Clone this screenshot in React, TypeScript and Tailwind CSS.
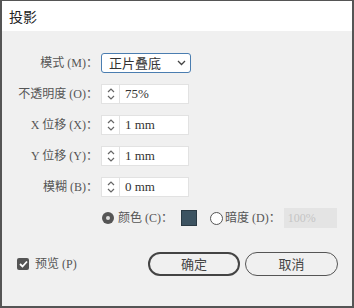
import React from 'react';

const font = { fontFamily: '"Liberation Serif", "Noto Sans CJK SC", serif' };
const cjk = { fontFamily: '"Noto Sans CJK SC", "Liberation Sans", sans-serif' };

const Spinner: React.FC<{ value: string }> = ({ value }) => (
  <div className="flex h-[20px] w-[88px] border border-[#e2e2e2] bg-white">
    <div className="flex w-[18px] flex-col items-center justify-center border-r border-[#e2e2e2]">
      <svg width="10" height="16" viewBox="0 0 10 16" fill="none" stroke="#666" strokeWidth="1.2">
        <path d="M2 6 L5 3 L8 6" />
        <path d="M2 10 L5 13 L8 10" />
      </svg>
    </div>
    <div className="flex items-center pl-[5px] text-[13px] text-[#333]" style={font}>{value}</div>
  </div>
);

const Label: React.FC<{ text: string }> = ({ text }) => (
  <div className="text-right text-[12px] text-[#555] whitespace-nowrap" style={font}>{text}</div>
);

const fields = [
  { label: '不透明度 (O)：', value: '75%' },
  { label: 'X 位移 (X)：', value: '1 mm' },
  { label: 'Y 位移 (Y)：', value: '1 mm' },
  { label: '模糊 (B)：', value: '0 mm' },
];

export default function App() {
  return (
    <div className="flex h-[308px] w-[354px] flex-col border-t border-x-2 border-b-2 border-[#555] bg-[#f0f0f0]">
      <div className="flex h-[30px] items-center bg-white pl-[7px] text-[14px] text-[#222]" style={cjk}>
        投影
      </div>

      <div className="flex flex-col gap-[11px] pt-[22px]">
        <div className="grid grid-cols-[96px_1fr] items-center gap-x-[3px]">
          <Label text="模式 (M)：" />
          <div className="flex h-[20px] w-[90px] items-center justify-between rounded-[3px] border border-[#4a7db0] bg-white pl-[7px] pr-[4px]">
            <span className="text-[13px] text-[#333]" style={cjk}>正片叠底</span>
            <svg width="9" height="6" viewBox="0 0 9 6" fill="none" stroke="#444" strokeWidth="1.3">
              <path d="M1 1 L4.5 4.5 L8 1" />
            </svg>
          </div>
        </div>

        {fields.map(f => (
          <div key={f.label} className="grid grid-cols-[96px_1fr] items-center gap-x-[3px]">
            <Label text={f.label} />
            <Spinner value={f.value} />
          </div>
        ))}

        <div className="flex h-[20px] items-center pl-[100px]">
          <div className="flex h-[12px] w-[12px] items-center justify-center rounded-full bg-[#555]">
            <div className="h-[4px] w-[4px] rounded-full bg-[#ddd]" />
          </div>
          <span className="ml-[4px] text-[12px] text-[#555]" style={font}>颜色 (C)：</span>
          <div className="ml-[8px] h-[16px] w-[16px] border border-[#2a3a44] bg-[#3c5361]" />
          <div className="ml-[13px] h-[13px] w-[13px] rounded-full border border-[#555] bg-white" />
          <span className="ml-[2px] text-[12px] text-[#555]" style={font}>暗度 (D)：</span>
          <div className="ml-[3px] flex h-[20px] w-[53px] items-center bg-[#e4e4e4] pl-[4px] text-[12px] text-[#c4c4c4]" style={font}>
            100%
          </div>
        </div>

        <div className="mt-[13px] flex items-center pl-[15px]">
          <div className="flex h-[12px] w-[12px] items-center justify-center rounded-[2px] bg-[#555]">
            <svg width="9" height="8" viewBox="0 0 9 8" fill="none" stroke="#fff" strokeWidth="1.8">
              <path d="M1 4 L3.5 6.5 L8 1.5" />
            </svg>
          </div>
          <span className="ml-[6px] w-[47px] text-[12px] text-[#555]" style={font}>预览 (P)</span>
          <button className="ml-[66px] flex h-[24px] w-[92px] items-center justify-center rounded-full border-2 border-[#444] text-[13px] text-[#444]" style={cjk}>
            确定
          </button>
          <button className="ml-[5px] flex h-[24px] w-[93px] items-center justify-center rounded-full border border-[#555] text-[13px] text-[#444]" style={cjk}>
            取消
          </button>
        </div>
      </div>
    </div>
  );
}
